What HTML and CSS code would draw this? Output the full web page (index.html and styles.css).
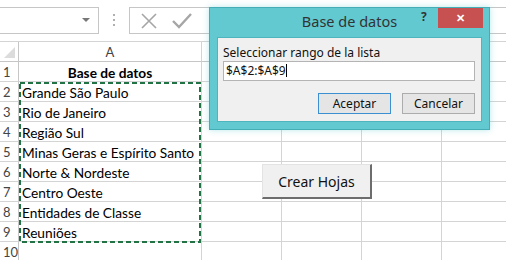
FILE: index.html
```html
<!DOCTYPE html>
<html lang="es">
<head>
    <meta charset="UTF-8">
    <title>Base de datos</title>
    <link rel="stylesheet" href="styles.css">
</head>
<body>
    <div class="app">
        <div class="toolbar">
            <div class="namebox"><span class="dd"></span></div>
            <div class="grip"><i></i><i></i><i></i></div>
            <div class="formula">
                <svg class="ico" width="18" height="16" viewBox="0 0 18 16">
                    <path d="M2 1 L16 15 M16 1 L2 15" stroke="#a6a6a6" stroke-width="1.6" fill="none"/>
                </svg>
                <svg class="ico" width="20" height="16" viewBox="0 0 20 16">
                    <path d="M1 8 L7 14 L19 1" stroke="#a6a6a6" stroke-width="2.4" fill="none"/>
                </svg>
            </div>
        </div>

        <div class="sheet">
            <div class="row head">
                <div class="rh corner"><span class="tri"></span></div>
                <div class="c a">A</div><div class="c"></div><div class="c"></div><div class="c"></div><div class="c"></div>
            </div>
            <div class="row">
                <div class="rh">1</div>
                <div class="c a title">Base de datos</div><div class="c"></div><div class="c"></div><div class="c"></div><div class="c"></div>
            </div>
            <div class="row">
                <div class="rh">2</div>
                <div class="c a">Grande São Paulo</div><div class="c"></div><div class="c"></div><div class="c"></div><div class="c"></div>
            </div>
            <div class="row">
                <div class="rh">3</div>
                <div class="c a">Rio de Janeiro</div><div class="c"></div><div class="c"></div><div class="c"></div><div class="c"></div>
            </div>
            <div class="row">
                <div class="rh">4</div>
                <div class="c a">Região Sul</div><div class="c"></div><div class="c"></div><div class="c"></div><div class="c"></div>
            </div>
            <div class="row">
                <div class="rh">5</div>
                <div class="c a">Minas Geras e Espírito Santo</div><div class="c"></div><div class="c"></div><div class="c"></div><div class="c"></div>
            </div>
            <div class="row">
                <div class="rh">6</div>
                <div class="c a">Norte &amp; Nordeste</div><div class="c"></div><div class="c"></div><div class="c"></div><div class="c"></div>
            </div>
            <div class="row">
                <div class="rh">7</div>
                <div class="c a">Centro Oeste</div><div class="c"></div><div class="c"></div><div class="c"></div><div class="c"></div>
            </div>
            <div class="row">
                <div class="rh">8</div>
                <div class="c a">Entidades de Classe</div><div class="c"></div><div class="c"></div><div class="c"></div><div class="c"></div>
            </div>
            <div class="row">
                <div class="rh">9</div>
                <div class="c a">Reuniões</div><div class="c"></div><div class="c"></div><div class="c"></div><div class="c"></div>
            </div>
            <div class="row">
                <div class="rh">10</div>
                <div class="c a"></div><div class="c"></div><div class="c"></div><div class="c"></div><div class="c"></div>
            </div>
        </div>

        <svg class="marquee" width="182" height="161">
            <rect x="1" y="1" width="180" height="159" fill="none" stroke="#217346" stroke-width="2" stroke-dasharray="5 3"/>
        </svg>

        <button type="button" class="crear">Crear Hojas</button>

        <div class="dialog">
            <div class="dlg-title">
                <span class="dlg-name">Base de datos</span>
                <span class="help">?</span>
                <span class="close">&#x2715;</span>
            </div>
            <div class="dlg-body">
                <label class="dlg-label" for="rango">Seleccionar rango de la lista</label>
                <div class="dlg-input" id="rango">$A$2:$A$9<span class="caret"></span></div>
                <div class="dlg-buttons">
                    <button type="button" class="btn primary">Aceptar</button>
                    <button type="button" class="btn">Cancelar</button>
                </div>
            </div>
        </div>
    </div>
</body>
</html>
```

FILE: styles.css
```css
body {
    margin: 0;
    background-color: #fff;
    overflow: hidden;
}
.app {
    position: relative;
    width: 506px;
    height: 260px;
    overflow: hidden;
    font-family: Lato, "Liberation Sans", sans-serif;
}

/* formula bar */
.toolbar {
    height: 42px;
    border-bottom: 1px solid #d4d4d4;
    display: flex;
    align-items: flex-start;
    padding-top: 7px;
    box-sizing: border-box;
}
.namebox {
    width: 100px;
    height: 27px;
    margin-left: -1px;
    border: 1px solid #c6c6c6;
    box-sizing: border-box;
    position: relative;
    flex-shrink: 0;
}
.dd {
    position: absolute;
    right: 8px;
    top: 10px;
    border-left: 4px solid transparent;
    border-right: 4px solid transparent;
    border-top: 4px solid #777;
}
.grip {
    width: 30px;
    flex-shrink: 0;
    display: flex;
    flex-direction: column;
    align-items: center;
    gap: 3px;
    padding-top: 7px;
}
.grip i {
    width: 2px;
    height: 2px;
    background-color: #b0b0b0;
}
.formula {
    flex: 1;
    height: 27px;
    border: 1px solid #c6c6c6;
    border-right: none;
    box-sizing: border-box;
    display: flex;
    align-items: center;
    gap: 14px;
    padding-left: 10px;
}

/* sheet */
.row {
    display: flex;
    height: 20px;
}
.rh, .c {
    box-sizing: border-box;
    border-right: 1px solid #d4d4d4;
    border-bottom: 1px solid #d4d4d4;
    height: 20px;
    flex-shrink: 0;
}
.rh {
    width: 19px;
    font-size: 13px;
    color: #444;
    text-align: left;
    padding-left: 3px;
    line-height: 20px;
    border-right-color: #c6c6c6;
    white-space: nowrap;
    overflow: hidden;
}
.c {
    width: 80px;
}
.c.a {
    width: 183px;
    font-size: 13.7px;
    color: #000;
    padding-left: 3px;
    line-height: 21px;
    white-space: nowrap;
}
.head .c, .head .rh {
    border-bottom-color: #c6c6c6;
}
.head .c.a {
    text-align: center;
    color: #444;
    font-size: 13px;
    padding-left: 0;
}
.corner {
    position: relative;
}
.tri {
    position: absolute;
    right: 3px;
    bottom: 3px;
    border-left: 11px solid transparent;
    border-bottom: 11px solid #dcdcdc;
}
.c.title {
    font-weight: bold;
    text-align: center;
    padding-left: 0;
}
.marquee {
    position: absolute;
    left: 19px;
    top: 82px;
}

.crear {
    position: absolute;
    left: 262px;
    top: 164px;
    width: 110px;
    height: 35px;
    background-color: #f0f0f0;
    border: 1px solid #e3e3e3;
    border-right: 2px solid #6d6d6d;
    border-bottom: 2px solid #6d6d6d;
    font-family: "Noto Sans", sans-serif;
    font-size: 14px;
    color: #111;
    padding: 0;
}

/* dialog */
.dialog {
    position: absolute;
    left: 209px;
    top: 7px;
    width: 281px;
    height: 123px;
    background-color: #62c9d1;
    border: 1px solid #45adb6;
    box-sizing: border-box;
    box-shadow: 0 0 6px rgba(98, 201, 209, 0.45);
    font-family: "Noto Sans", sans-serif;
}
.dlg-title {
    height: 29px;
    position: relative;
}
.dlg-name {
    position: absolute;
    left: 0;
    right: 0;
    top: 3px;
    text-align: center;
    font-size: 14.5px;
    color: #333;
}
.help {
    position: absolute;
    left: 211px;
    top: 0;
    font-size: 12px;
    font-weight: bold;
    color: #333;
}
.close {
    position: absolute;
    left: 228px;
    top: 0;
    width: 45px;
    height: 20px;
    background-color: #c75050;
    color: #fff;
    font-size: 11px;
    font-weight: bold;
    text-align: center;
    line-height: 20px;
}
.dlg-body {
    margin: 0 7px;
    height: 85px;
    background-color: #f0f0f0;
    border: 1px solid #4cb5be;
    box-sizing: border-box;
    padding: 6px 5px 0 5px;
    font-size: 12px;
    color: #111;
}
.dlg-label {
    display: block;
    height: 17px;
}
.dlg-input {
    height: 20px;
    background-color: #fff;
    border: 1px solid #b4b4b4;
    box-sizing: border-box;
    padding-left: 2px;
    line-height: 18px;
    width: 252px;
}
.caret {
    display: inline-block;
    width: 1px;
    height: 13px;
    background-color: #000;
    vertical-align: -2px;
}
.dlg-buttons {
    display: flex;
    justify-content: flex-end;
    gap: 11px;
    margin-top: 12px;
    padding-right: 1px;
}
.btn {
    width: 73px;
    height: 21px;
    padding: 0;
    background-color: #e5e5e5;
    border: 1px solid #acacac;
    font-family: "Noto Sans", sans-serif;
    font-size: 12px;
    color: #111;
}
.btn.primary {
    border-color: #3c8fd0;
}
```
